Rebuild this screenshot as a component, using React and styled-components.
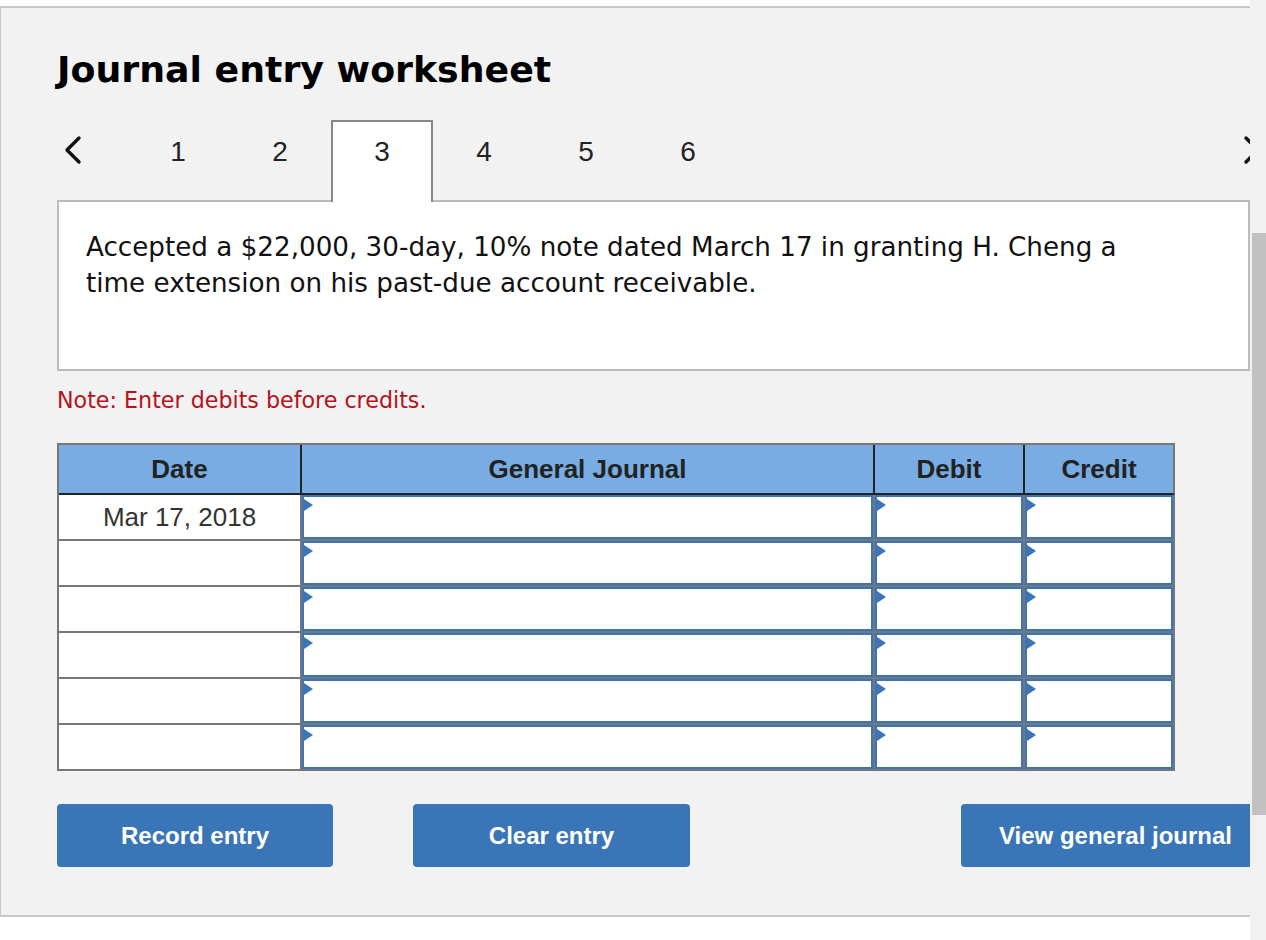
import React from 'react';
import styled, { createGlobalStyle } from 'styled-components';

const GlobalStyle = createGlobalStyle`
  html, body {
    margin: 0;
    padding: 0;
    background: #fff;
    overflow: hidden;
  }
`;

const Page = styled.div`
  position: relative;
  width: 1266px;
  height: 940px;
  overflow: hidden;
  padding-top: 6px;
  box-sizing: border-box;
`;

const Panel = styled.section`
  width: 1330px;
  background: #f2f2f2;
  border-top: 2px solid #c8c8c8;
  border-bottom: 2px solid #c8c8c8;
  border-left: 1px solid #c8c8c8;
  padding: 0 0 48px 56px;
`;

const Title = styled.h1`
  margin: 0;
  padding-top: 44px;
  font-family: "DejaVu Sans", Verdana, sans-serif;
  font-size: 36.3px;
  line-height: 36px;
  font-weight: bold;
  color: #000;
`;

const NavRow = styled.div`
  display: flex;
  width: 1205px;
  height: 82px;
  margin-top: 32px;
`;

const ChevronBox = styled.div`
  width: ${p => (p.$right ? '20px' : '70px')};
  margin-left: ${p => (p.$right ? 'auto' : '0')};
  padding: 15px 0 0 ${p => (p.$right ? '0' : '6px')};
  box-sizing: border-box;
`;

const Tab = styled.div`
  position: relative;
  z-index: 1;
  width: 102px;
  height: 82px;
  box-sizing: border-box;
  padding-top: 16px;
  text-align: center;
  font-family: "Liberation Sans", Arial, sans-serif;
  font-size: 28px;
  line-height: 28px;
  color: #222;
  border: 2px solid ${p => (p.$active ? '#888' : 'transparent')};
  border-bottom: none;
  background: ${p => (p.$active ? '#fff' : 'transparent')};
`;

const Prompt = styled.div`
  width: 1193px;
  height: 171px;
  margin-top: -2px;
  box-sizing: border-box;
  border: 2px solid #bcbcbc;
  background: #fff;
  padding: 27px 80px 27px 27px;
  font-family: "DejaVu Sans", Verdana, sans-serif;
  font-size: 26.2px;
  line-height: 36px;
  color: #111;
`;

const Note = styled.p`
  margin: 16px 0 0;
  font-family: "DejaVu Sans", Verdana, sans-serif;
  font-size: 22.2px;
  line-height: 26px;
  color: #b5121b;
`;

const Grid = styled.div`
  display: grid;
  grid-template-columns: 243px 573px 150px 150px;
  width: 1118px;
  margin-top: 30px;
  border-top: 2px solid #777;
  border-left: 2px solid #777;
  box-sizing: border-box;
`;

const HeadCell = styled.div`
  height: 50px;
  box-sizing: border-box;
  display: flex;
  align-items: center;
  justify-content: center;
  background: #78ace3;
  border-right: 2px solid ${p => (p.$last ? '#777' : '#222')};
  border-bottom: 2px solid #222;
  font-family: "Liberation Sans", Arial, sans-serif;
  font-weight: bold;
  font-size: 26px;
  color: #222;
`;

const DateCell = styled.div`
  height: 46px;
  box-sizing: border-box;
  display: flex;
  align-items: center;
  justify-content: center;
  background: #fff;
  border-right: 2px solid #777;
  border-bottom: 2px solid #777;
  font-family: "Liberation Sans", Arial, sans-serif;
  font-size: 26px;
  color: #333;
`;

const EntryCell = styled.div`
  height: 46px;
  box-sizing: border-box;
  border-right: 2px solid #777;
  border-bottom: 2px solid #777;
`;

const Field = styled.div`
  position: relative;
  height: 100%;
  box-sizing: border-box;
  border: 2px solid #3a75b8;
  background: #fff;

  &::before {
    content: '';
    position: absolute;
    top: 2px;
    left: 0;
    border-left: 9px solid #3a75b8;
    border-top: 6px solid transparent;
    border-bottom: 6px solid transparent;
  }
`;

const ButtonRow = styled.div`
  display: flex;
  gap: 80px;
  width: 1213px;
  margin-top: 33px;
`;

const Button = styled.button`
  width: ${p => p.$w}px;
  height: 63px;
  margin-left: ${p => (p.$push ? 'auto' : '0')};
  border: none;
  border-radius: 4px;
  background: #3a75b8;
  color: #fff;
  font-family: "Liberation Sans", Arial, sans-serif;
  font-weight: bold;
  font-size: 24px;
  cursor: pointer;
`;

const ScrollTrack = styled.div`
  position: absolute;
  top: 0;
  right: 0;
  width: 16px;
  height: 100%;
  background: #f1f1f1;
`;

const ScrollThumb = styled.div`
  position: absolute;
  top: 233px;
  left: 2px;
  width: 14px;
  height: 582px;
  background: #c1c1c1;
`;

const Chevron = ({ right }) => (
  <svg width="20" height="30" viewBox="0 0 20 30">
    <polyline
      points={right ? '4,3 16,15 4,27' : '16,3 4,15 16,27'}
      fill="none"
      stroke="#111"
      strokeWidth="3.4"
      strokeLinecap="round"
      strokeLinejoin="round"
    />
  </svg>
);

const rows = ['Mar 17, 2018', '', '', '', '', ''];

const App = () => {
  return (
    <Page>
      <GlobalStyle />
      <Panel>
        <Title>Journal entry worksheet</Title>
        <NavRow>
          <ChevronBox>
            <Chevron />
          </ChevronBox>
          {[1, 2, 3, 4, 5, 6].map(n => (
            <Tab key={n} $active={n === 3}>{n}</Tab>
          ))}
          <ChevronBox $right>
            <Chevron right />
          </ChevronBox>
        </NavRow>
        <Prompt>
          Accepted a $22,000, 30-day, 10% note dated March 17 in granting H. Cheng a time
          extension on his past-due account receivable.
        </Prompt>
        <Note>Note: Enter debits before credits.</Note>
        <Grid>
          <HeadCell>Date</HeadCell>
          <HeadCell>General Journal</HeadCell>
          <HeadCell>Debit</HeadCell>
          <HeadCell $last>Credit</HeadCell>
          {rows.map((date, i) => (
            <React.Fragment key={i}>
              <DateCell>{date}</DateCell>
              <EntryCell><Field /></EntryCell>
              <EntryCell><Field /></EntryCell>
              <EntryCell><Field /></EntryCell>
            </React.Fragment>
          ))}
        </Grid>
        <ButtonRow>
          <Button $w={276}>Record entry</Button>
          <Button $w={277}>Clear entry</Button>
          <Button $w={309} $push>View general journal</Button>
        </ButtonRow>
      </Panel>
      <ScrollTrack>
        <ScrollThumb />
      </ScrollTrack>
    </Page>
  );
};

export default App;
